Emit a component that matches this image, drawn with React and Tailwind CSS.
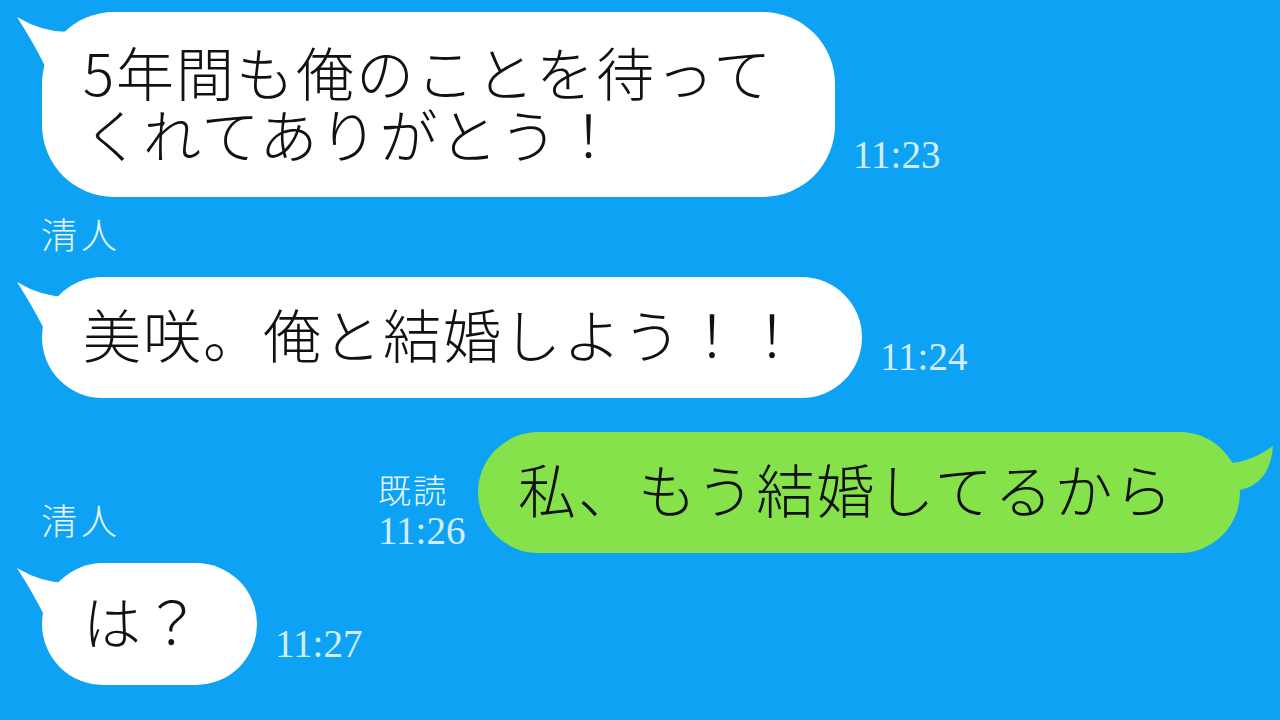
function WhiteTail() {
  return (
    <svg className="absolute left-[-25px] top-0" width="60" height="70" viewBox="0 0 60 70">
      <path d="M0 5 Q25 20 51 20 L51 58 L27 58 L27 52 Q16 30 0 5 Z" fill="#ffffff" />
    </svg>
  );
}

function GreenTail() {
  return (
    <svg className="absolute right-[-40px] top-0" width="70" height="70" viewBox="0 0 70 70">
      <path d="M63 14 Q40 30 20 31 L15 45 L15 58 L30 58 Q60 52 63 14 Z" fill="#85e24a" />
    </svg>
  );
}

function Time({ children, className = "" }) {
  return (
    <div
      className={
        "ml-[18px] font-['Liberation_Serif',serif] text-[39px] leading-none text-[#d2edff] " +
        className
      }
    >
      {children}
    </div>
  );
}

function Name({ children, className = "" }) {
  return (
    <div
      className={
        "pl-[41px] text-[36px] font-extralight leading-none tracking-[4px] text-[#eaf7ff] " + className
      }
    >
      {children}
    </div>
  );
}

export default function App() {
  return (
    <div className="h-[720px] w-full overflow-hidden bg-[#0ea2f4] pt-[12px] font-['Noto_Sans_CJK_JP','Noto_Sans',sans-serif] text-[#111111]">
      {/* message 1 */}
      <div className="flex items-end pl-[42px]">
        <div className="relative flex h-[185px] w-[793px] shrink-0 items-center whitespace-nowrap rounded-[72px] bg-white pb-[5px] pl-[41px] text-[58px] font-light leading-[62px] tracking-[2px]">
          <WhiteTail />
          <p className="relative">
            5年間も俺のことを待って
            <br />
            くれてありがとう！
          </p>
        </div>
        <Time className="mb-[23px]">11:23</Time>
      </div>

      <Name className="mt-[18px]">清人</Name>

      {/* message 2 */}
      <div className="mt-[26px] flex items-end pl-[42px]">
        <div className="relative flex h-[121px] w-[820px] shrink-0 items-center whitespace-nowrap rounded-full bg-white pb-[10px] pl-[41px] text-[58px] font-light leading-[60px] tracking-[2px]">
          <WhiteTail />
          <p className="relative">美咲。俺と結婚しよう！！</p>
        </div>
        <Time className="mb-[22px]">11:24</Time>
      </div>

      {/* message 3 (mine) */}
      <div className="mt-[34px] flex items-end justify-end pr-[40px]">
        <div className="mb-[3px] mr-[11px] flex w-[89px] flex-col items-start">
          <div className="text-[33px] font-extralight leading-none tracking-[2px] text-[#eaf7ff]">既読</div>
          <div className="mt-[5px] font-['Liberation_Serif',serif] text-[39px] leading-none text-[#d2edff]">
            11:26
          </div>
        </div>
        <div className="relative flex h-[121px] w-[762px] shrink-0 items-center whitespace-nowrap rounded-full bg-[#85e24a] pb-[10px] pl-[40px] text-[58px] font-light leading-[60px] tracking-[2px]">
          <GreenTail />
          <p className="relative">私、もう結婚してるから</p>
        </div>
      </div>

      <Name className="mt-[-52px]">清人</Name>

      {/* message 4 */}
      <div className="mt-[26px] flex items-end pl-[42px]">
        <div className="relative flex h-[122px] w-[215px] shrink-0 items-center whitespace-nowrap rounded-full bg-white pb-[8px] pl-[41px] text-[58px] font-light leading-[60px] tracking-[2px]">
          <WhiteTail />
          <p className="relative">は？</p>
        </div>
        <Time className="mb-[22px]">11:27</Time>
      </div>
    </div>
  );
}
